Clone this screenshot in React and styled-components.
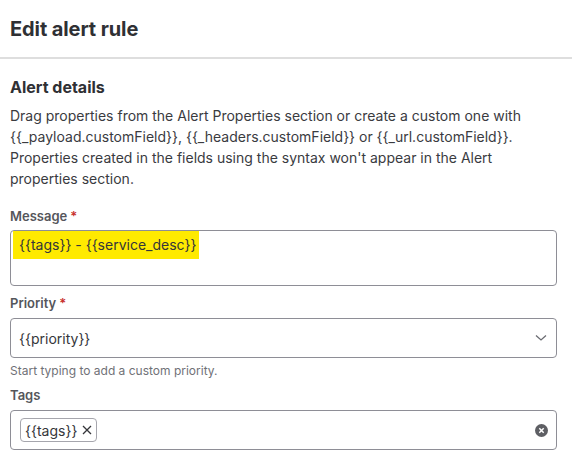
import React from 'react';
import styled, { createGlobalStyle } from 'styled-components';

const GlobalStyle = createGlobalStyle`
  html, body {
    margin: 0;
    padding: 0;
    background: #fff;
  }
  body {
    font-family: Inter, "Noto Sans", sans-serif;
    color: #35363a;
  }
`;

const Page = styled.div`
  width: 572px;
  height: 460px;
  overflow: hidden;
  background: #fff;
`;

const Header = styled.div`
  height: 57px;
  display: flex;
  align-items: center;
  padding-left: 10px;
  border-bottom: 2px solid #dedede;
`;

const Title = styled.h1`
  margin: 0;
  font-size: 20px;
  font-weight: 700;
  color: #2f3034;
  letter-spacing: -0.1px;
`;

const Body = styled.div`
  padding: 18px 15px 0 10px;
  display: flex;
  flex-direction: column;
`;

const SectionTitle = styled.h2`
  margin: 0;
  font-size: 16px;
  line-height: 20px;
  font-weight: 700;
  color: #2f3034;
`;

const Description = styled.p`
  margin: 8px 0 0;
  font-size: 14px;
  line-height: 21px;
  color: #3a3b3f;
`;

const Field = styled.div`
  display: flex;
  flex-direction: column;
  margin-top: ${(p) => p.$gap}px;
`;

const Label = styled.label`
  font-size: 13px;
  line-height: 16px;
  font-weight: 600;
  color: #55565b;
  margin-bottom: ${(p) => p.$below || 6}px;
`;

const Required = styled.span`
  color: #c8302c;
  margin-left: 3px;
`;

const Box = styled.div`
  box-sizing: border-box;
  height: ${(p) => p.$height}px;
  border: 1px solid #8e8e96;
  border-radius: 4px;
  display: flex;
  align-items: ${(p) => (p.$top ? 'flex-start' : 'center')};
  padding: ${(p) => p.$pad};
  font-size: 14px;
  color: #35363a;
`;

const Highlight = styled.span`
  display: inline-block;
  background: #ffea00;
  height: 28px;
  line-height: 28px;
  padding: 0 3px 0 6px;
`;

const Value = styled.span`
  flex: 1;
`;

const Helper = styled.div`
  font-size: 12px;
  line-height: 16px;
  color: #707177;
  margin-top: 5px;
`;

const Chip = styled.span`
  display: inline-flex;
  align-items: center;
  gap: 5px;
  height: 24px;
  box-sizing: border-box;
  padding: 0 4px 0 4px;
  border: 1px solid #a6a6ad;
  border-radius: 4px;
  font-size: 14px;
  color: #35363a;
`;

const Grow = styled.div`
  flex: 1;
`;

const Chevron = () => (
  <svg width="12" height="8" viewBox="0 0 12 8" style={{ marginRight: 9 }}>
    <path d="M1 1.5 L6 6 L11 1.5" fill="none" stroke="#6b6c72" strokeWidth="1.3" />
  </svg>
);

const SmallX = () => (
  <svg width="10" height="10" viewBox="0 0 10 10">
    <path d="M1 1 L9 9 M9 1 L1 9" stroke="#35363a" strokeWidth="1.3" />
  </svg>
);

const ClearIcon = () => (
  <svg width="13" height="13" viewBox="0 0 13 13" style={{ marginRight: 8 }}>
    <circle cx="6.5" cy="6.5" r="6.5" fill="#5e5f64" />
    <path d="M4.3 4.3 L8.7 8.7 M8.7 4.3 L4.3 8.7" stroke="#fff" strokeWidth="1.5" />
  </svg>
);

export default function App() {
  return (
    <Page>
      <GlobalStyle />
      <Header>
        <Title>Edit alert rule</Title>
      </Header>
      <Body>
        <SectionTitle>Alert details</SectionTitle>
        <Description>
          Drag properties from the Alert Properties section or create a custom one with{' '}
          {'{{_payload.customField}}, {{_headers.customField}} or {{_url.customField}}.'}{' '}
          Properties created in the fields using the syntax won't appear in the Alert
          properties section.
        </Description>

        <Field $gap={19}>
          <Label>
            Message<Required>*</Required>
          </Label>
          <Box $height={56} $top $pad="0 2px">
            <Highlight>{'{{tags}} - {{service_desc}}'}</Highlight>
          </Box>
        </Field>

        <Field $gap={9}>
          <Label $below={7}>
            Priority<Required>*</Required>
          </Label>
          <Box $height={40} $pad="0 0 0 8px">
            <Value>{'{{priority}}'}</Value>
            <Chevron />
          </Box>
          <Helper>Start typing to add a custom priority.</Helper>
        </Field>

        <Field $gap={8}>
          <Label $below={7}>Tags</Label>
          <Box $height={40} $pad="0 0 0 9px">
            <Chip>
              {'{{tags}}'}
              <SmallX />
            </Chip>
            <Grow />
            <ClearIcon />
          </Box>
        </Field>
      </Body>
    </Page>
  );
}
